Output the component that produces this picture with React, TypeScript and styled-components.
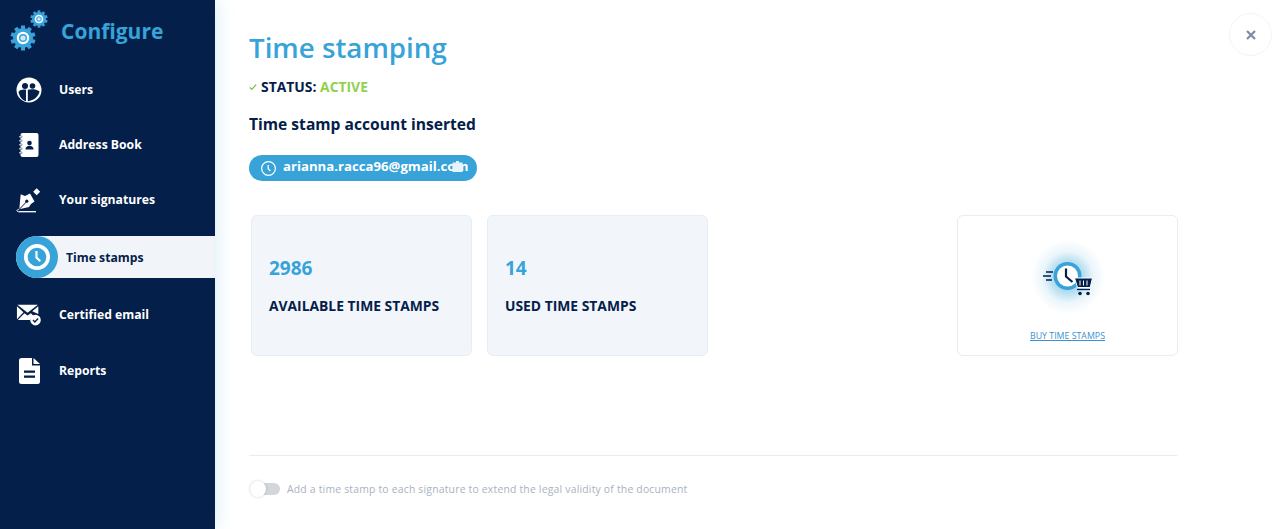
import * as React from 'react';
import styled, { createGlobalStyle } from 'styled-components';

const NAVY = '#04204a';
const BLUE = '#37a3d9';

const GlobalStyle = createGlobalStyle`
  html, body {
    margin: 0;
    height: 100%;
    background: #fff;
    font-family: "Open Sans", "Liberation Sans", sans-serif;
  }
  #root {
    height: 100%;
  }
`;

function Gear({ size }: { size: number }) {
  const teeth = Array.from({ length: 10 }, (_, i) => i * 36);
  return (
    <svg width={size} height={size} viewBox="0 0 26 26">
      {teeth.map((deg) => (
        <rect key={deg} x="11" y="0.5" width="4" height="5" fill={BLUE} transform={`rotate(${deg} 13 13)`} />
      ))}
      <circle cx="13" cy="13" r="10" fill={BLUE} />
      <circle cx="13" cy="13" r="6.2" fill="#fff" />
      <circle cx="13" cy="13" r="4" fill={BLUE} />
      <circle cx="13" cy="13" r="2.6" fill="#cfe9f6" />
    </svg>
  );
}

function UsersIcon() {
  return (
    <svg width="26" height="26" viewBox="0 0 26 26">
      <circle cx="13" cy="13" r="12.5" fill="#fff" />
      <circle cx="9" cy="9" r="3" fill={NAVY} />
      <circle cx="16.500" cy="9" r="2.800" fill={NAVY} />
      <path d="M2.500 15c1.500-2.300 4.500-2.800 7.500-2.300v11.500C6.500 23.500 3.500 20 2.500 15z" fill={NAVY} />
      <path d="M11.800 12.700c3.500-.8 8.500-.8 11.700 1.800-1 5-5.500 9-11.700 9.700z" fill={NAVY} />
    </svg>
  );
}

function BookIcon() {
  return (
    <svg width="20" height="24" viewBox="0 0 20 24">
      <rect x="1.500" y="0" width="18" height="24" rx="2" fill="#fff" />
      {[3, 7, 11, 15, 19].map((y) => (
        <rect key={y} x="0" y={y} width="3" height="1.500" fill="#fff" stroke={NAVY} strokeWidth="0.4" />
      ))}
      <circle cx="10.500" cy="10" r="2.300" fill={NAVY} />
      <path d="M6.500 16.500c0-2.500 1.800-3.700 4-3.700s4 1.200 4 3.700z" fill={NAVY} />
    </svg>
  );
}

function PenIcon() {
  return (
    <svg width="26" height="28" viewBox="0 0 26 28">
      <path d="M20.700 2.200l3.500 3.500-3.500 3.500-3.500-3.500z" fill="#fff" />
      <path d="M4.700 8.300 9 10l5-2.500 4.500 8-3.500 2.500-2 3-9.700 2.300z" fill="#fff" />
      <path d="M3.300 23.300l7-7.300" stroke={NAVY} strokeWidth="1" fill="none" />
      <circle cx="10.800" cy="15.200" r="1.600" fill={NAVY} />
      <path d="M2.500 25.700H20" stroke="#fff" strokeWidth="1.300" fill="none" />
      <path d="M2.500 25.700c-2.200-.2-2-2 .3-2.400" stroke="#fff" strokeWidth="1" fill="none" />
    </svg>
  );
}

function MailCheckIcon() {
  return (
    <svg width="28" height="24" viewBox="0 0 28 24">
      <path d="M1.500 1H23.500L12.500 9.500z" fill="#fff" />
      <path d="M1 2.500V16.500L8 9z" fill="#fff" />
      <path d="M2 17.500 9 10l3.500 2.500L16 10l4 4a7 7 0 0 0-5 3.500z" fill="#fff" />
      <path d="M24 2.500V11L17.500 8z" fill="#fff" />
      <circle cx="21" cy="17.500" r="5.700" fill="#fff" />
      <path d="M18.300 17.500l2 2 3.500-3.800" stroke={NAVY} strokeWidth="1.500" fill="none" />
    </svg>
  );
}

function ReportIcon() {
  return (
    <svg width="21" height="26" viewBox="0 0 21 26">
      <path d="M2.500 0H13v7.500h8V23.500a2.500 2.500 0 0 1-2.500 2.500h-16A2.500 2.500 0 0 1 0 23.500v-21A2.500 2.500 0 0 1 2.500 0z" fill="#fff" />
      <path d="M14.500 0 21 6h-6.500z" fill="#fff" />
      <rect x="5" y="12.500" width="11" height="2.300" fill={NAVY} />
      <rect x="5" y="17.500" width="11" height="2.300" fill={NAVY} />
    </svg>
  );
}

function ClockIcon({ size, color, stroke }: { size: number; color: string; stroke: number }) {
  return (
    <svg width={size} height={size} viewBox="0 0 24 24">
      <circle cx="12" cy="12" r={12 - stroke / 2} fill="none" stroke={color} strokeWidth={stroke} />
      <path d="M11.500 6.500V12.500l3.500 3.500" fill="none" stroke={color} strokeWidth="2" />
    </svg>
  );
}

function BuyIcon() {
  return (
    <svg width="50" height="36" viewBox="0 0 50 36">
      <path d="M3 10h7M0 14h8M3 18h6" stroke={NAVY} strokeWidth="1.600" fill="none" />
      <circle cx="24.500" cy="14" r="14" fill={BLUE} />
      <circle cx="24.500" cy="14" r="10.500" fill="#fff" />
      <path d="M23 6.500v8l6.500 5.500" stroke={NAVY} strokeWidth="2.200" fill="none" />
      <path d="M31.500 16h18l-2.300 9.500H34.500z" fill={NAVY} stroke="#fff" strokeWidth="1" />
      <path d="M37 18.500v5M40.500 18.500v5M44 18.500v5" stroke="#fff" strokeWidth="1" />
      <path d="M34 27.500h13" stroke={NAVY} strokeWidth="1.300" />
      <circle cx="37" cy="31.500" r="1.800" fill={NAVY} />
      <circle cx="45" cy="31.500" r="1.800" fill={NAVY} />
    </svg>
  );
}

function ClipIcon() {
  return (
    <svg width="11" height="11" viewBox="0 0 11 11">
      <path d="M4 0h3v1.500h3.500V11h-10V1.500H4z" fill="#e6f3fa" />
    </svg>
  );
}

const NAV_ITEMS = [
  { label: 'Users', icon: <UsersIcon /> },
  { label: 'Address Book', icon: <BookIcon /> },
  { label: 'Your signatures', icon: <PenIcon /> },
  { label: 'Time stamps', active: true },
  { label: 'Certified email', icon: <MailCheckIcon /> },
  { label: 'Reports', icon: <ReportIcon /> },
];

export default function App() {
  return (
    <>
      <GlobalStyle />
      <Page>
        <Sidebar>
          <Brand>
            <BrandGears>
              <SmallGear><Gear size={18} /></SmallGear>
              <Gear size={26} />
            </BrandGears>
            <BrandTitle>Configure</BrandTitle>
          </Brand>
          <Nav>
            {NAV_ITEMS.map((item) =>
              item.active ? (
                <ActiveItem key={item.label}>
                  <ActiveBadge><ClockIcon size={26} color="#fff" stroke={3.400} /></ActiveBadge>
                  <ActiveLabel>{item.label}</ActiveLabel>
                </ActiveItem>
              ) : (
                <NavItem key={item.label}>
                  <NavIcon>{item.icon}</NavIcon>
                  <NavLabel>{item.label}</NavLabel>
                </NavItem>
              )
            )}
          </Nav>
        </Sidebar>
        <Main>
          <CloseButton>
            <svg width="10" height="10" viewBox="0 0 10 10">
              <path d="M1 1l8 8M9 1l-8 8" stroke="#7c8aa3" strokeWidth="2.200" />
            </svg>
          </CloseButton>
          <Title>Time stamping</Title>
          <Status>
            <svg width="8" height="8" viewBox="0 0 9 8">
              <path d="M1 4.500 3.200 6.700 8 1.300" stroke="#7cc142" strokeWidth="1.500" fill="none" />
            </svg>
            <span>STATUS: <StatusValue>ACTIVE</StatusValue></span>
          </Status>
          <Subtitle>Time stamp account inserted</Subtitle>
          <AccountPill>
            <ClockIcon size={15} color="#fff" stroke={2} />
            <AccountEmail>arianna.racca96@gmail.com</AccountEmail>
            <PillClip><ClipIcon /></PillClip>
          </AccountPill>
          <Cards>
            <StatCard>
              <StatValue>2986</StatValue>
              <StatLabel>AVAILABLE TIME STAMPS</StatLabel>
            </StatCard>
            <StatCard>
              <StatValue>14</StatValue>
              <StatLabel>USED TIME STAMPS</StatLabel>
            </StatCard>
            <BuyCard>
              <BuyGlow><BuyIcon /></BuyGlow>
              <BuyLink>BUY TIME STAMPS</BuyLink>
            </BuyCard>
          </Cards>
          <Divider />
          <ToggleRow>
            <Toggle>
              <ToggleKnob />
            </Toggle>
            <ToggleText>Add a time stamp to each signature to extend the legal validity of the document</ToggleText>
          </ToggleRow>
        </Main>
      </Page>
    </>
  );
}

const Page = styled.div`
  display: flex;
  height: 529px;
  overflow: hidden;
`;

const Sidebar = styled.aside`
  width: 215px;
  flex: none;
  background: ${NAVY};
  display: flex;
  flex-direction: column;
  position: relative;
  z-index: 1;
  box-shadow: 0 0 18px rgba(55, 163, 217, 0.22);
`;

const Brand = styled.div`
  display: flex;
  align-items: flex-start;
  height: 62px;
  padding: 10px 0 0 10px;
  box-sizing: border-box;
`;

const BrandGears = styled.div`
  position: relative;
  width: 26px;
  height: 40px;
  padding-top: 15px;
  box-sizing: border-box;
  margin-right: 25px;
`;

const SmallGear = styled.div`
  position: absolute;
  left: 20px;
  top: 0;
`;

const BrandTitle = styled.div`
  color: ${BLUE};
  font-size: 21px;
  font-weight: 700;
  line-height: 30px;
  margin-top: 6px;
`;

const Nav = styled.nav`
  display: flex;
  flex-direction: column;
`;

const NavItem = styled.div`
  display: flex;
  align-items: center;
  height: 55px;
  padding-left: 16px;

  &:last-child {
    margin-top: 1px;
  }
`;

const NavIcon = styled.div`
  width: 26px;
  height: 28px;
  display: flex;
  align-items: center;
  justify-content: center;
  margin-right: 17px;
`;

const NavLabel = styled.span`
  color: #fff;
  font-size: 12.2px;
  font-weight: 700;
`;

const ActiveItem = styled.div`
  display: flex;
  align-items: center;
  height: 42px;
  margin: 9px 0 9px 16px;
  background: #f1f5f9;
  border-radius: 21px 0 0 21px;
`;

const ActiveBadge = styled.div`
  width: 42px;
  height: 42px;
  border-radius: 50%;
  background: ${BLUE};
  display: flex;
  align-items: center;
  justify-content: center;
  margin-right: 8px;
`;

const ActiveLabel = styled.span`
  color: ${NAVY};
  font-size: 12.2px;
  font-weight: 700;
`;

const Main = styled.main`
  flex: 1;
  position: relative;
  padding: 27px 102px 0 34px;
  display: flex;
  flex-direction: column;
  align-items: flex-start;
`;

const CloseButton = styled.div`
  position: absolute;
  right: 8px;
  top: 13px;
  width: 43px;
  height: 43px;
  border: 1px solid #eef6f8;
  border-radius: 50%;
  box-sizing: border-box;
  display: flex;
  align-items: center;
  justify-content: center;
`;

const Title = styled.h1`
  margin: 0;
  color: ${BLUE};
  font-size: 27.7px;
  font-weight: 600;
  line-height: 41px;
`;

const Status = styled.div`
  margin-top: 9px;
  display: flex;
  align-items: center;
  gap: 4px;
  color: ${NAVY};
  font-size: 13.9px;
  font-weight: 700;
  line-height: 20px;
`;

const StatusValue = styled.span`
  color: #92d050;
`;

const Subtitle = styled.h2`
  margin: 17px 0 0;
  color: ${NAVY};
  font-size: 15.6px;
  font-weight: 700;
  line-height: 20px;
`;

const AccountPill = styled.div`
  position: relative;
  margin-top: 21px;
  width: 228px;
  height: 26px;
  box-sizing: border-box;
  padding-left: 12px;
  border-radius: 13px;
  background: ${BLUE};
  display: flex;
  align-items: center;
  gap: 7px;
`;

const AccountEmail = styled.span`
  color: #fff;
  font-size: 13.2px;
  font-weight: 700;
  line-height: 22px;
  margin-top: -4px;
`;

const PillClip = styled.div`
  position: absolute;
  left: 203px;
  top: 6px;
  display: flex;
`;

const Cards = styled.div`
  margin-top: 34px;
  align-self: stretch;
  display: flex;
  gap: 15px;
  padding-left: 2px;
`;

const StatCard = styled.div`
  width: 221px;
  height: 141px;
  box-sizing: border-box;
  background: #f2f6fa;
  border: 1px solid #e4eef6;
  border-radius: 6px;
  padding: 0 17px 1px;
  display: flex;
  flex-direction: column;
  justify-content: center;
`;

const StatValue = styled.div`
  color: ${BLUE};
  font-size: 19px;
  font-weight: 700;
  line-height: 26px;
`;

const StatLabel = styled.div`
  margin-top: 15px;
  color: ${NAVY};
  font-size: 13.85px;
  font-weight: 700;
  line-height: 20px;
`;

const BuyCard = styled.div`
  margin-left: auto;
  width: 221px;
  height: 141px;
  box-sizing: border-box;
  border: 1px solid #e8edf2;
  border-radius: 6px;
  display: flex;
  flex-direction: column;
  align-items: center;
  padding-top: 21px;
`;

const BuyGlow = styled.div`
  width: 80px;
  height: 80px;
  box-sizing: border-box;
  padding-top: 25px;
  display: flex;
  justify-content: center;
  background: radial-gradient(
    circle at 50% 50%,
    rgba(55, 163, 217, 0.4) 25%,
    rgba(55, 163, 217, 0.1) 45%,
    rgba(55, 163, 217, 0) 66%
  );
`;

const BuyLink = styled.a`
  margin-top: 13px;
  color: #3b90cf;
  font-size: 8.8px;
  line-height: 12px;
  text-decoration: underline;
`;

const Divider = styled.div`
  margin: 99px 1px 0 0;
  align-self: stretch;
  height: 1px;
  background: #e8ecef;
`;

const ToggleRow = styled.div`
  margin-top: 26px;
  display: flex;
  align-items: center;
  gap: 7px;
  padding-left: 1px;
`;

const Toggle = styled.div`
  position: relative;
  width: 30px;
  height: 12px;
  border-radius: 6px;
  background: #d3d6da;
`;

const ToggleKnob = styled.div`
  position: absolute;
  left: 0;
  top: -2px;
  width: 16px;
  height: 16px;
  border-radius: 50%;
  background: #fff;
  box-shadow: 0 0 3px rgba(0, 0, 0, 0.2);
`;

const ToggleText = styled.span`
  color: #a9b2c0;
  font-size: 10.4px;
  letter-spacing: 0.2px;
`;
